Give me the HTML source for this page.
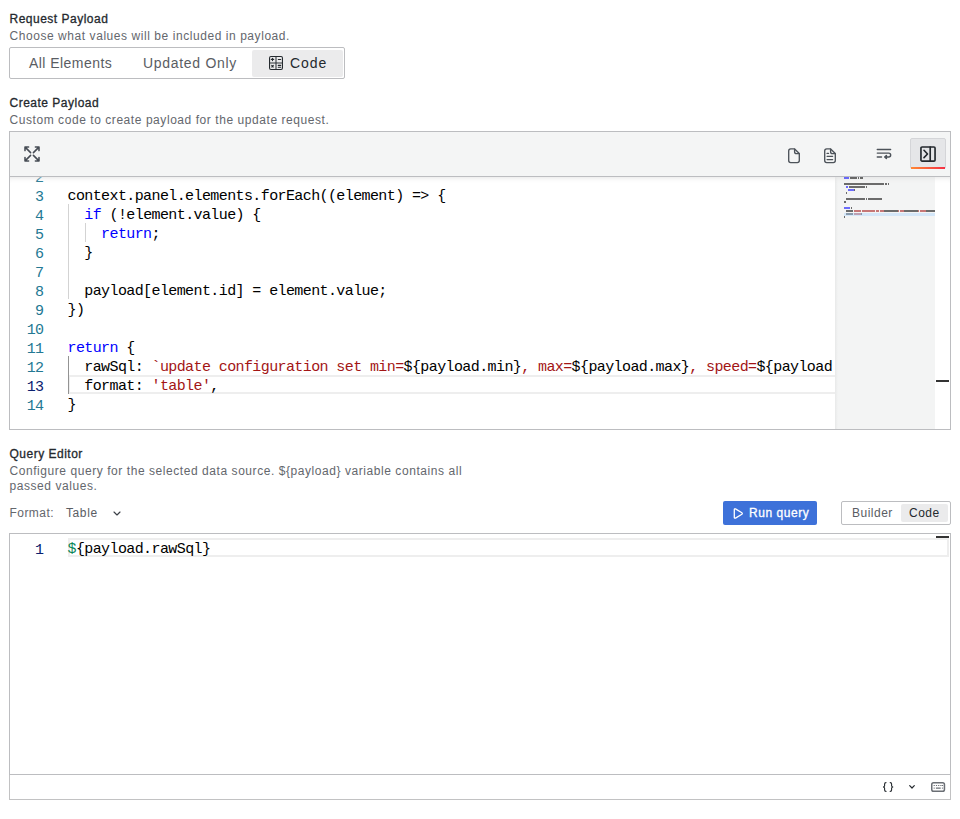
<!DOCTYPE html>
<html><head><meta charset="utf-8">
<style>
*{box-sizing:border-box;margin:0;padding:0}
html,body{width:960px;height:819px;background:#fff;overflow:hidden;font-family:"Liberation Sans",sans-serif;color:#24292e}
.abs{position:absolute}
.lbl{position:absolute;left:9.5px;font-size:12px;color:#24292e;-webkit-text-stroke:0.3px #24292e;letter-spacing:0.5px;white-space:nowrap;line-height:15px}
.desc{position:absolute;left:9.5px;font-size:12px;color:#64676d;white-space:nowrap;letter-spacing:0.56px;line-height:15px}
.rg{position:absolute;border:1px solid #bcbdc0;border-radius:2px;background:#fff}
.rb{position:absolute;font-size:14px;color:#5a5d63;white-space:nowrap;line-height:16px;letter-spacing:0.35px}
.ed{position:absolute;border:1px solid #bcbdc0}
.mono{font-family:"Liberation Mono",monospace;font-size:15px;letter-spacing:-0.6px;white-space:pre}
.ln{position:absolute;left:0;width:33.5px;text-align:right;color:#237893;height:19px;line-height:19px}
.ln.act{color:#0b216f}
.cl{position:absolute;left:57.5px;color:#000;height:19px;line-height:19px}
.kw{color:#0000ff}
.st{color:#a31515}
.guide{position:absolute;width:1px;background:#d3d3d3}
.mm{position:absolute;height:2px}
svg{position:absolute;overflow:visible}
.ic{fill:none;stroke:#4d535a;stroke-width:1.35;stroke-linecap:round;stroke-linejoin:round}
</style></head><body>

<div class="lbl" style="top:12px">Request Payload</div>
<div class="desc" style="top:29px">Choose what values will be included in payload.</div>
<div class="rg" style="left:9px;top:47px;width:336px;height:32px">
  <div class="rb" style="left:19px;top:7px;letter-spacing:0.45px">All Elements</div>
  <div class="rb" style="left:133px;top:7px;letter-spacing:0.7px">Updated Only</div>
  <div class="abs" style="left:242px;top:2px;width:91px;height:27px;background:#ebebec;border-radius:2px"></div>
  <svg style="left:259px;top:8px" width="14" height="14" viewBox="0 0 14 14">
    <rect x="0.55" y="0.55" width="12.9" height="12.9" rx="1.4" fill="none" stroke="#24292e" stroke-width="1.1"/>
    <path d="M7 0.6V13.4M0.6 6.9H13.4" stroke="#2f3439" stroke-width="1.05"/>
    <g stroke="#24292e" stroke-width="1.1" stroke-linecap="round">
    <path d="M2.3 3.4H4.7M3.5 2.2V4.6M9.3 3.5H11.7M2.7 9.4L4.3 11M4.3 9.4L2.7 11M9.3 9.4H11.7M9.3 11.3H11.7"/>
    </g>
  </svg>
  <div class="rb" style="left:280px;top:7px;color:#24292e;letter-spacing:0.9px">Code</div>
</div>

<div class="lbl" style="top:96px">Create Payload</div>
<div class="desc" style="top:113px">Custom code to create payload for the update request.</div>

<div class="ed" style="left:9px;top:131px;width:942px;height:299px;overflow:hidden">
  <div class="abs" style="left:0;top:0;width:940px;height:45px;background:#f4f5f5;border-bottom:1px solid #bcbdc0"></div>
  <div class="abs mono" style="left:0;top:45px;width:940px;height:252px;overflow:hidden">
    <div class="abs" style="left:58px;top:198px;width:780px;height:19px;border:2px solid #eeeeee"></div>
    <div class="guide" style="left:58px;top:27px;height:95px"></div>
    <div class="guide" style="left:75px;top:46px;height:19px"></div>
    <div class="guide" style="left:58px;top:179px;height:38px;background:#939393"></div>
<div class="ln" style="top:-8px">2</div>
<div class="cl" style="top:-9px"></div>
<div class="ln" style="top:11px">3</div>
<div class="cl" style="top:10px">context.panel.elements.forEach((element) =&gt; {</div>
<div class="ln" style="top:30px">4</div>
<div class="cl" style="top:29px">  <span class="kw">if</span> (!element.value) {</div>
<div class="ln" style="top:49px">5</div>
<div class="cl" style="top:48px">    <span class="kw">return</span>;</div>
<div class="ln" style="top:68px">6</div>
<div class="cl" style="top:67px">  }</div>
<div class="ln" style="top:87px">7</div>
<div class="cl" style="top:86px"></div>
<div class="ln" style="top:106px">8</div>
<div class="cl" style="top:105px">  payload[element.id] = element.value;</div>
<div class="ln" style="top:125px">9</div>
<div class="cl" style="top:124px">})</div>
<div class="ln" style="top:144px">10</div>
<div class="cl" style="top:143px"></div>
<div class="ln" style="top:163px">11</div>
<div class="cl" style="top:162px"><span class="kw">return</span> {</div>
<div class="ln" style="top:182px">12</div>
<div class="cl" style="top:181px">  rawSql: <span class="st">`update configuration set min=</span>${payload.min}<span class="st">, max=</span>${payload.max}<span class="st">, speed=</span>${payload.speed}<span class="st">`</span>,</div>
<div class="ln act" style="top:201px">13</div>
<div class="cl" style="top:200px">  format: <span class="st">&#x27;table&#x27;</span>,</div>
<div class="ln" style="top:220px">14</div>
<div class="cl" style="top:219px">}</div>
    <div class="abs" style="left:825px;top:0;width:100px;height:252px;background:#f3f4f4"></div>
    <div class="abs" style="left:825px;top:0;width:3px;height:252px;background:linear-gradient(90deg,#e8e9e9,rgba(243,244,244,0))"></div>
    <div class="abs" style="left:0;top:0;width:940px;height:6px;box-shadow:inset 0 6px 6px -6px #dddddd"></div>
  </div>
</div>
<div class="mm" style="left:844px;top:177px;width:5px;background:rgba(0,0,255,0.56)"></div>
<div class="mm" style="left:850px;top:177px;width:7px;background:rgba(0,0,0,0.56)"></div>
<div class="mm" style="left:858px;top:177px;width:1px;background:rgba(0,0,0,0.56)"></div>
<div class="mm" style="left:860px;top:177px;width:3px;background:rgba(0,0,0,0.56)"></div>
<div class="mm" style="left:844px;top:183px;width:40px;background:rgba(0,0,0,0.56)"></div>
<div class="mm" style="left:885px;top:183px;width:2px;background:rgba(0,0,0,0.56)"></div>
<div class="mm" style="left:888px;top:183px;width:1px;background:rgba(0,0,0,0.56)"></div>
<div class="mm" style="left:846px;top:186px;width:2px;background:rgba(0,0,255,0.56)"></div>
<div class="mm" style="left:849px;top:186px;width:16px;background:rgba(0,0,0,0.56)"></div>
<div class="mm" style="left:866px;top:186px;width:1px;background:rgba(0,0,0,0.56)"></div>
<div class="mm" style="left:848px;top:189px;width:6px;background:rgba(0,0,255,0.56)"></div>
<div class="mm" style="left:854px;top:189px;width:1px;background:rgba(0,0,0,0.56)"></div>
<div class="mm" style="left:846px;top:192px;width:1px;background:rgba(0,0,0,0.56)"></div>
<div class="mm" style="left:846px;top:198px;width:19px;background:rgba(0,0,0,0.56)"></div>
<div class="mm" style="left:866px;top:198px;width:1px;background:rgba(0,0,0,0.56)"></div>
<div class="mm" style="left:868px;top:198px;width:14px;background:rgba(0,0,0,0.56)"></div>
<div class="mm" style="left:844px;top:201px;width:2px;background:rgba(0,0,0,0.56)"></div>
<div class="mm" style="left:844px;top:207px;width:6px;background:rgba(0,0,255,0.56)"></div>
<div class="mm" style="left:851px;top:207px;width:1px;background:rgba(0,0,0,0.56)"></div>
<div class="mm" style="left:846px;top:210px;width:7px;background:rgba(0,0,0,0.56)"></div>
<div class="mm" style="left:854px;top:210px;width:7px;background:rgba(163,21,21,0.56)"></div>
<div class="mm" style="left:862px;top:210px;width:13px;background:rgba(163,21,21,0.56)"></div>
<div class="mm" style="left:876px;top:210px;width:3px;background:rgba(163,21,21,0.56)"></div>
<div class="mm" style="left:880px;top:210px;width:4px;background:rgba(163,21,21,0.56)"></div>
<div class="mm" style="left:884px;top:210px;width:14px;background:rgba(0,0,0,0.56)"></div>
<div class="mm" style="left:898px;top:210px;width:1px;background:rgba(163,21,21,0.56)"></div>
<div class="mm" style="left:900px;top:210px;width:4px;background:rgba(163,21,21,0.56)"></div>
<div class="mm" style="left:904px;top:210px;width:14px;background:rgba(0,0,0,0.56)"></div>
<div class="mm" style="left:918px;top:210px;width:1px;background:rgba(163,21,21,0.56)"></div>
<div class="mm" style="left:920px;top:210px;width:6px;background:rgba(163,21,21,0.56)"></div>
<div class="mm" style="left:926px;top:210px;width:9px;background:rgba(0,0,0,0.56)"></div>
<div class="mm" style="left:846px;top:213px;width:7px;background:rgba(0,0,0,0.56)"></div>
<div class="mm" style="left:854px;top:213px;width:7px;background:rgba(163,21,21,0.56)"></div>
<div class="mm" style="left:861px;top:213px;width:1px;background:rgba(0,0,0,0.56)"></div>
<div class="mm" style="left:844px;top:216px;width:1px;background:rgba(0,0,0,0.56)"></div>
<div class="abs" style="left:844px;top:213px;width:91px;height:3px;background:rgba(173,214,255,0.44)"></div>
<div class="abs" style="left:936px;top:380px;width:13px;height:2px;background:#333"></div>

<!-- toolbar icons -->
<svg style="left:24px;top:146px" width="16" height="16" viewBox="0 0 16 16">
  <g fill="none" stroke="#464c54" stroke-width="1.55" stroke-linecap="round" stroke-linejoin="round">
    <path d="M1 4.6V1h3.6M1.6 1.6l5 5"/>
    <path d="M15 4.6V1h-3.6M14.4 1.6l-5 5"/>
    <path d="M1 11.4V15h3.6M1.6 14.4l5-5"/>
    <path d="M15 11.4V15h-3.6M14.4 14.4l-5-5"/>
  </g>
</svg>
<svg style="left:788px;top:148px" width="12" height="15" viewBox="0 0 12 15">
  <path class="ic" d="M2.7 0.9H6.6L11.3 5.6V12.6A2 2 0 0 1 9.3 14.6H2.7A2 2 0 0 1 0.7 12.6V2.9A2 2 0 0 1 2.7 0.9Z"/>
  <path class="ic" d="M6.6 1.1V3.7A1.9 1.9 0 0 0 8.5 5.6H11.1"/>
</svg>
<svg style="left:824px;top:148px" width="12" height="15" viewBox="0 0 12 15">
  <path class="ic" d="M2.7 0.9H6.6L11.3 5.6V12.6A2 2 0 0 1 9.3 14.6H2.7A2 2 0 0 1 0.7 12.6V2.9A2 2 0 0 1 2.7 0.9Z"/>
  <path class="ic" d="M6.6 1.1V3.7A1.9 1.9 0 0 0 8.5 5.6H11.1"/>
  <path class="ic" d="M3.1 5.4h1.4M3.1 8.3h5.5M3.1 11.6h5.5"/>
</svg>
<svg style="left:876px;top:148px" width="16" height="12" viewBox="0 0 16 12">
  <g fill="none" stroke="#4d535a" stroke-width="1.45" stroke-linecap="round" stroke-linejoin="round">
    <path d="M1.3 1.4h13.3M1.3 5.1h11.4a1.95 1.95 0 0 1 0 3.9H10.2M1.3 9h4.2"/>
    <path d="M8.7 9l1.7-1.5v3z" fill="#4d535a"/>
  </g>
</svg>
<div class="abs" style="left:910px;top:138px;width:36px;height:31px;background:#e5e6e8;border:1px solid #d4d5d8;border-radius:2px"></div>
<div class="abs" style="left:911px;top:167px;width:34px;height:2px;background:linear-gradient(90deg,#ff8833,#f43045)"></div>
<svg style="left:920px;top:146px" width="16" height="16" viewBox="0 0 16 16">
  <g fill="none" stroke="#24292e" stroke-width="1.65" stroke-linecap="round" stroke-linejoin="round">
    <rect x="0.95" y="0.95" width="14.1" height="14.1" rx="1.1"/>
    <path d="M10.2 1v14"/>
    <path d="M4 4.3l3.5 3.7-3.5 3.6"/>
  </g>
</svg>

<div class="lbl" style="top:447px">Query Editor</div>
<div class="desc" style="top:464px">Configure query for the selected data source. ${payload} variable contains all</div>
<div class="desc" style="top:479px">passed values.</div>
<div class="desc" style="top:506px;letter-spacing:0.45px">Format:</div>
<div class="abs" style="left:66px;top:506px;font-size:12px;color:#5a5d63;line-height:15px;letter-spacing:0.6px">Table</div>
<svg style="left:113px;top:511px" width="8" height="5" viewBox="0 0 8 5">
  <path d="M1 1l3 3 3-3" fill="none" stroke="#3b4047" stroke-width="1.15" stroke-linecap="round" stroke-linejoin="round"/>
</svg>

<div class="abs" style="left:723px;top:501px;width:94px;height:24px;background:#3d71d9;border-radius:2px"></div>
<svg style="left:733px;top:508px" width="10" height="11" viewBox="0 0 10 11">
  <path d="M1.3 1.6v7.8a0.8 0.8 0 0 0 1.2 0.7l6.4-3.9a0.8 0.8 0 0 0 0-1.4L2.5 0.9a0.8 0.8 0 0 0-1.2 0.7Z" fill="none" stroke="#fff" stroke-width="1.3" stroke-linejoin="round"/>
</svg>
<div class="abs" style="left:749px;top:506px;font-size:12px;color:#fff;-webkit-text-stroke:0.3px #fff;letter-spacing:0.55px;line-height:15px">Run query</div>

<div class="rg" style="left:841px;top:501px;width:110px;height:24px">
  <div class="abs" style="left:59px;top:2px;width:47px;height:18px;background:#ebebec;border-radius:2px"></div>
  <div class="abs" style="left:10px;top:4px;font-size:12px;color:#5a5d63;line-height:15px;letter-spacing:0.5px">Builder</div>
  <div class="abs" style="left:67px;top:4px;font-size:12px;color:#24292e;line-height:15px;letter-spacing:0.5px">Code</div>
</div>

<div class="ed" style="left:9px;top:533px;width:942px;height:242px;overflow:hidden">
  <div class="abs mono" style="left:0;top:0;width:940px;height:240px">
    <div class="abs" style="left:58px;top:4px;width:881px;height:19px;border:2px solid #eeeeee"></div>
    <div class="ln act" style="top:7px">1</div>
    <div class="cl" style="top:6px"><span style="color:#098658">$</span>{payload.rawSql}</div>
  </div>
  <div class="abs" style="left:926px;top:2px;width:13px;height:2px;background:#333"></div>
</div>
<div class="abs" style="left:9px;top:774px;width:942px;height:26px;border:1px solid #c2c2c3;border-top:none"></div>
<div class="abs" style="left:9px;top:774px;width:942px;height:1px;background:#bcbdc0"></div>
<svg style="left:882px;top:782px" width="12" height="10" viewBox="0 0 12 10">
  <g fill="none" stroke="#24292e" stroke-width="1.1" stroke-linecap="round">
    <path d="M4 0.6C2.9 0.6 2.6 1.1 2.6 1.9V3.8C2.6 4.5 2.2 5 1 5C2.2 5 2.6 5.5 2.6 6.2V8.1C2.6 8.9 2.9 9.4 4 9.4"/>
    <path d="M8.2 0.6C9.3 0.6 9.6 1.1 9.6 1.9V3.8C9.6 4.5 10 5 11.2 5C10 5 9.6 5.5 9.6 6.2V8.1C9.6 8.9 9.3 9.4 8.2 9.4"/>
  </g>
</svg>
<svg style="left:909px;top:785px" width="6" height="4" viewBox="0 0 6 4">
  <path d="M0.7 0.7l2.3 2.3 2.3-2.3" fill="none" stroke="#24292e" stroke-width="1.2" stroke-linecap="round" stroke-linejoin="round"/>
</svg>
<svg style="left:931px;top:782px" width="15" height="10" viewBox="0 0 15 10">
  <rect x="0.75" y="0.75" width="12.7" height="8.6" rx="1.8" fill="none" stroke="#6b6f75" stroke-width="1.5"/>
  <g fill="#6b6f75">
    <rect x="2.6" y="3" width="1.2" height="1"/><rect x="4.9" y="3" width="1.2" height="1"/><rect x="7.1" y="3" width="1.2" height="1"/><rect x="9.3" y="3" width="1.2" height="1"/><rect x="10.9" y="3" width="1.2" height="1"/>
    <rect x="2.6" y="5.6" width="1.2" height="1"/><rect x="4.9" y="5.6" width="4.8" height="1" fill="#464c54"/><rect x="10.9" y="5.6" width="1.2" height="1"/>
  </g>
</svg>

</body></html>
